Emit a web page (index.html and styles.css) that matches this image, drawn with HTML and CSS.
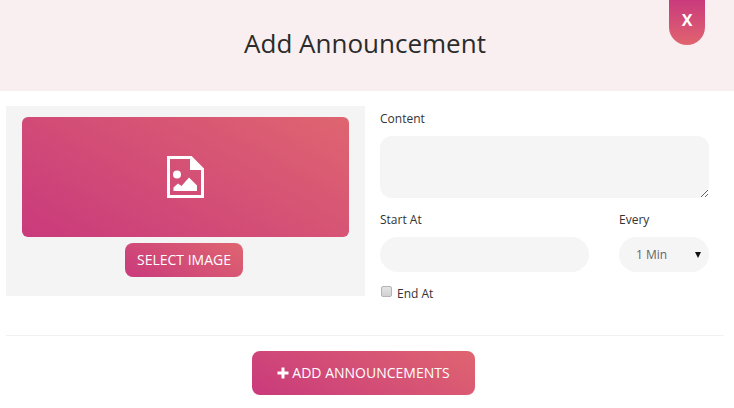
FILE: index.html
```html
<!DOCTYPE html>
<html lang="en">
<head>
<meta charset="utf-8">
<title>Add Announcement</title>
<link rel="stylesheet" href="styles.css">
</head>
<body>
<div class="modal">
  <header class="modal-head">
    <h1 class="modal-title">Add Announcement</h1>
    <button class="close-btn" type="button">X</button>
  </header>
  <main class="modal-body">
    <section class="image-panel">
      <div class="image-box">
        <svg class="image-icon" viewBox="0 0 37 42" width="37" height="42" aria-hidden="true">
          <path class="icon-line" d="M1.500 1.500H24L35.500 13V40.500H1.500Z"/>
          <path class="icon-fill" d="M23 1.500V14H36Z"/>
          <circle class="icon-fill" cx="10" cy="18.500" r="4"/>
          <path class="icon-fill" d="M6.500 35V31.500L11 27.500L14.500 30L22 21.500L30 29.500V35Z"/>
        </svg>
      </div>
      <button class="btn btn-select" type="button">SELECT IMAGE</button>
    </section>
    <section class="form">
      <label class="label label-content">Content</label>
      <textarea class="textarea"></textarea>
      <div class="row">
        <div class="col-start">
          <label class="label">Start At</label>
          <input class="input" type="text">
        </div>
        <div class="col-every">
          <label class="label">Every</label>
          <div class="select-wrap">
            <select class="select"><option>1 Min</option></select>
          </div>
        </div>
      </div>
      <div class="end-row">
        <input class="check" type="checkbox" id="end">
        <label class="label" for="end">End At</label>
      </div>
    </section>
  </main>
  <footer class="modal-foot">
    <button class="btn btn-add" type="button">
      <svg class="plus" viewBox="0 0 12 12" width="12" height="12" aria-hidden="true">
        <path class="icon-fill" d="M4.500 0.500H7.500V4.500H11.500V7.500H7.500V11.500H4.500V7.500H0.500V4.500H4.500Z"/>
      </svg>ADD ANNOUNCEMENTS
    </button>
  </footer>
</div>
</body>
</html>
```
FILE: styles.css
```css
* { box-sizing: border-box; }
html, body { margin: 0; padding: 0; }
body {
  width: 734px;
  height: 408px;
  overflow: hidden;
  background: #fff;
  font-family: "Open Sans", sans-serif;
  color: #333;
}
.modal-head {
  position: relative;
  height: 91px;
  background: #f9eff0;
  display: flex;
  align-items: center;
  justify-content: center;
  padding: 0 4px 6px 0;
}
.modal-title {
  margin: 0;
  font-size: 26px;
  font-weight: 400;
  line-height: 34px;
  color: #2b2b2b;
}
.close-btn {
  position: absolute;
  top: 0;
  right: 29px;
  width: 36px;
  height: 45px;
  border: 0;
  border-radius: 0 0 18px 18px;
  background: linear-gradient(180deg, #c93a7c 0%, #e1646f 100%);
  color: #fff;
  font: 700 16px "Open Sans", sans-serif;
  padding: 0 0 5px;
}
.modal-body {
  display: flex;
  padding: 15px 25px 0 6px;
  gap: 15px;
  align-items: flex-start;
}
.image-panel {
  width: 359px;
  height: 190px;
  background: #f4f4f5;
  padding: 11px 16px 0;
  display: flex;
  flex-direction: column;
  align-items: flex-start;
  gap: 6px;
}
.image-box {
  width: 327px;
  height: 120px;
  border-radius: 6px;
  background: linear-gradient(30deg, #c93a7c 0%, #df6570 100%);
  display: flex;
  align-items: center;
  justify-content: center;
}
.image-icon { display: block; margin-top: 0; }
.icon-line { fill: none; stroke: #fff; stroke-width: 3; }
.icon-fill { fill: #fff; }
.btn {
  border: 0;
  color: #fff;
  background: linear-gradient(30deg, #c93a7c 0%, #df6570 100%);
  font-family: "Open Sans", sans-serif;
  font-weight: 400;
  padding: 0 0 1px;
}
.btn-select {
  width: 118px;
  height: 34px;
  margin-left: 103px;
  border-radius: 8px;
  font-size: 14px;
}
.form {
  width: 329px;
  display: flex;
  flex-direction: column;
}
.label {
  display: block;
  font-size: 12px;
  line-height: 16px;
  color: #333;
}
.label-content { margin-top: 5px; }
.textarea {
  display: block;
  width: 329px;
  height: 62px;
  margin-top: 9px;
  border: 0;
  border-radius: 12px;
  background: #f5f5f5;
  outline: 0;
}
.row {
  display: flex;
  justify-content: space-between;
  margin-top: 14px;
}
.col-start { width: 209px; }
.col-every { width: 90px; }
.input {
  display: block;
  width: 209px;
  height: 35px;
  margin-top: 9px;
  border: 0;
  border-radius: 18px;
  background: #f5f5f5;
}
.select-wrap {
  position: relative;
  margin-top: 9px;
}
.select-wrap::after {
  content: "";
  position: absolute;
  top: 15px;
  right: 8px;
  border-style: solid;
  border-width: 6px 3.500px 0;
  border-color: #111 transparent transparent;
}
.select {
  display: block;
  appearance: none;
  width: 90px;
  height: 35px;
  border: 0;
  border-radius: 18px;
  background: #f5f5f5;
  font: 12px "Open Sans", sans-serif;
  color: #666;
  padding-left: 17px;
}
.end-row {
  display: flex;
  align-items: flex-start;
  margin-top: 13px;
  gap: 5px;
}
.check {
  appearance: none;
  width: 11px;
  height: 11px;
  margin: 1px 0 0 1px;
  border: 1px solid #b4b4b4;
  border-radius: 2px;
  background: linear-gradient(180deg, #e4e4e4, #d2d2d2);
}
.end-row .label { margin-top: 1px; }
.modal-foot {
  margin: 33px 10px 0 6px;
  border-top: 1px solid #f1f1f1;
  padding-top: 15px;
  display: flex;
  justify-content: center;
}
.btn-add {
  display: flex;
  align-items: center;
  justify-content: center;
  width: 223px;
  height: 44px;
  border-radius: 8px;
  font-size: 14px;
  margin-right: 3px;
}
.plus { display: block; margin-right: 3px; }
```
